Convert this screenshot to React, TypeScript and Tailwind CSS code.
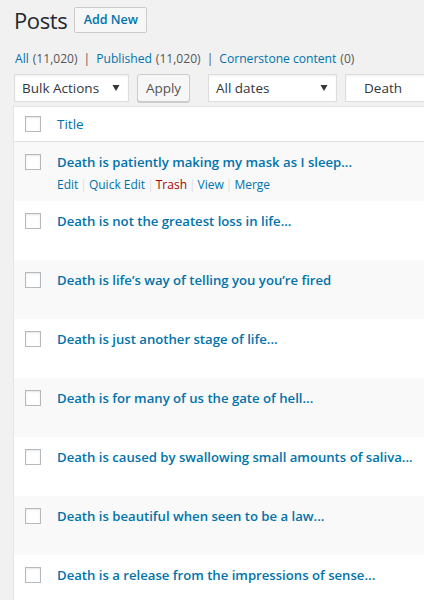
import React from "react";

const titles = [
  "Death is patiently making my mask as I sleep...",
  "Death is not the greatest loss in life...",
  "Death is life\u2019s way of telling you you\u2019re fired",
  "Death is just another stage of life...",
  "Death is for many of us the gate of hell...",
  "Death is caused by swallowing small amounts of saliva...",
  "Death is beautiful when seen to be a law...",
  "Death is a release from the impressions of sense...",
];

const font = { fontFamily: '"Open Sans", "Noto Sans", sans-serif' };

function Checkbox() {
  return (
    <div className="w-4 h-4 shrink-0 border border-[#b4b9be] bg-white shadow-[inset_0_1px_2px_rgba(0,0,0,0.1)]" />
  );
}

function Arrow() {
  return (
    <svg width="8" height="6" viewBox="0 0 8 6" className="shrink-0">
      <path d="M0.5 0 L7.5 0 L4 6 Z" fill="#32373c" />
    </svg>
  );
}

export default function App() {
  return (
    <div
      className="w-[424px] h-[600px] overflow-hidden bg-[#f1f1f1] text-[#444]"
      style={font}
    >
      <div className="flex items-center pl-[14px] pt-[7px] h-[33px]">
        <h1 className="text-[22px] leading-[26px] text-[#23282d] font-normal tracking-[-0.4px]">
          Posts
        </h1>
        <button className="ml-[7px] h-[26px] w-[73px] shrink-0 border border-[#ccc] rounded-[2px] bg-[#f7f7f7] text-[12.5px] font-semibold text-[#0073aa] leading-[24px]">
          Add New
        </button>
      </div>

      <div className="flex items-center pl-[15px] mt-[16px] h-[20px] text-[12.1px] text-[#555] whitespace-nowrap">
        <span className="text-[#0073aa]">All</span>
        <span className="ml-[4px]">(11,020)</span>
        <span className="mx-[6px]">|</span>
        <span className="text-[#0073aa]">Published</span>
        <span className="ml-[4px]">(11,020)</span>
        <span className="mx-[6px]">|</span>
        <span className="text-[#0073aa]">Cornerstone content</span>
        <span className="ml-[4px]">(0)</span>
      </div>

      <div className="flex items-center mt-[5px] pl-[14px] h-[28px] whitespace-nowrap">
        <div className="w-[115px] shrink-0 h-[28px] flex items-center justify-between pl-[7px] pr-[8px] bg-white border border-[#ddd] shadow-[inset_0_1px_2px_rgba(0,0,0,0.07)] text-[13.5px] text-[#32373c]">
          <span>Bulk Actions</span>
          <Arrow />
        </div>
        <button className="ml-[8px] w-[53px] shrink-0 h-[28px] border border-[#ccc] rounded-[3px] bg-[#f7f7f7] shadow-[0_1px_0_#ccc] text-[13.5px] text-[#555]">
          Apply
        </button>
        <div className="ml-[18px] w-[129px] shrink-0 h-[28px] flex items-center justify-between pl-[7px] pr-[8px] bg-white border border-[#ddd] shadow-[inset_0_1px_2px_rgba(0,0,0,0.07)] text-[13.5px] text-[#32373c]">
          <span>All dates</span>
          <Arrow />
        </div>
        <div className="ml-[8px] w-[120px] shrink-0 h-[28px] flex items-center pl-[18px] bg-white border border-[#ddd] shadow-[inset_0_1px_2px_rgba(0,0,0,0.07)] text-[13.5px] text-[#32373c]">
          Death
        </div>
      </div>

      <div className="mt-[4px] ml-[13px] border-l border-t border-[#e5e5e5] bg-white">
        <div className="flex items-center h-[35px] border-b border-[#e1e1e1] bg-white">
          <div className="pl-[11px] pr-[16px]">
            <Checkbox />
          </div>
          <span className="text-[13.5px] text-[#0073aa]">Title</span>
        </div>
        {titles.map((t, i) => (
          <div
            key={i}
            className={`flex items-start h-[59px] pt-[11px] ${i % 2 === 0 ? "bg-[#f9f9f9]" : "bg-white"}`}
          >
            <div className="pl-[11px] pr-[16px] pt-[1px]">
              <Checkbox />
            </div>
            <div className="flex flex-col whitespace-nowrap">
              <span className="text-[13.15px] leading-[18px] font-semibold text-[#0073aa]">
                {t}
              </span>
              {i === 0 && (
                <div className="flex items-center mt-[7px] text-[12px] leading-[14px] text-[#0073aa]">
                  <span>Edit</span>
                  <span className="mx-[2px] text-[#ddd]">|</span>
                  <span>Quick Edit</span>
                  <span className="mx-[2px] text-[#ddd]">|</span>
                  <span className="text-[#a00]">Trash</span>
                  <span className="mx-[2px] text-[#ddd]">|</span>
                  <span>View</span>
                  <span className="mx-[2px] text-[#ddd]">|</span>
                  <span>Merge</span>
                </div>
              )}
            </div>
          </div>
        ))}
      </div>
    </div>
  );
}
